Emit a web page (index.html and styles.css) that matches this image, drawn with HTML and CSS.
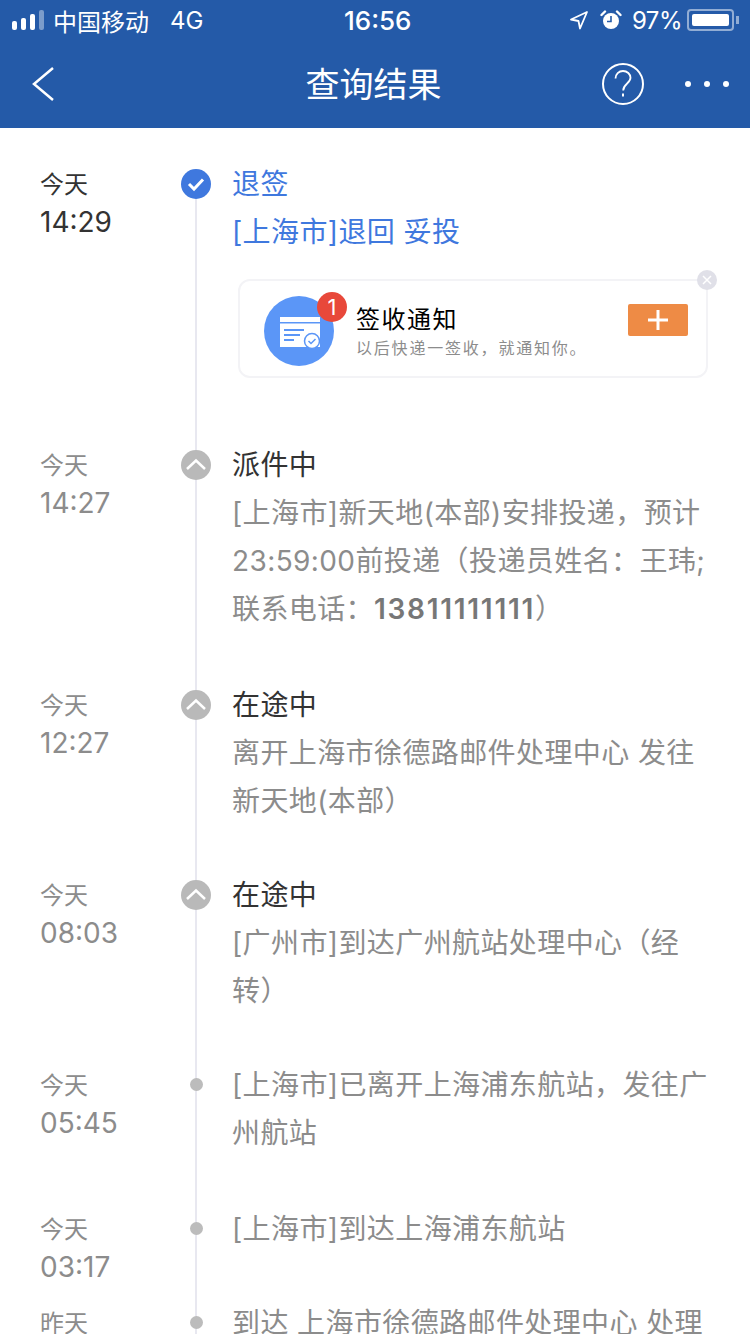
FILE: index.html
```html
<!DOCTYPE html>
<html lang="zh-CN">
<head>
    <meta charset="UTF-8">
    <meta name="viewport" content="width=device-width, initial-scale=1.0">
    <title>查询结果</title>
    <link rel="stylesheet" href="styles.css">
</head>
<body>
    <header class="header">
        <div class="status-bar">
            <div class="status-left">
                <div class="signal">
                    <span class="bar bar-1"></span>
                    <span class="bar bar-2"></span>
                    <span class="bar bar-3"></span>
                    <span class="bar bar-4"></span>
                </div>
                <span class="carrier">中国移动</span>
                <span class="network">4G</span>
            </div>
            <div class="status-time">16:56</div>
            <div class="status-right">
                <svg class="icon-location" width="20" height="20" viewBox="0 0 20 20">
                    <path d="M18 2 2 9.5l7.5 1.5L11 18.500z" fill="none" stroke="#fff" stroke-width="1.800" stroke-linejoin="round"/>
                </svg>
                <svg class="icon-alarm" width="22" height="22" viewBox="0 0 22 22">
                    <circle cx="11" cy="12" r="8" fill="#fff"/>
                    <path d="M11 7v5.500H7" fill="none" stroke="#245aa8" stroke-width="1.600"/>
                    <path d="M1.500 6 5 2.500M20.500 6 17 2.500" stroke="#fff" stroke-width="2.400" stroke-linecap="round"/>
                </svg>
                <span class="battery-text">97%</span>
                <div class="battery"><div class="battery-fill"></div></div>
                <div class="battery-nub"></div>
            </div>
        </div>
        <nav class="nav-bar">
            <div class="nav-side">
                <svg class="nav-back" width="24" height="36" viewBox="0 0 24 36">
                    <path d="M22 2 3 18l19 16" fill="none" stroke="#fff" stroke-width="2.500"/>
                </svg>
            </div>
            <h1 class="nav-title">查询结果</h1>
            <div class="nav-side nav-right">
                <svg width="44" height="44" viewBox="0 0 44 44">
                    <circle cx="22" cy="22" r="20" fill="none" stroke="#fff" stroke-width="2"/>
                    <path d="M14.500 16.500c0-4.500 3.300-7.500 7.500-7.500s7.500 3 7.500 6.800c0 5.500-7.300 6-7.300 12.700" fill="none" stroke="#fff" stroke-width="1.800"/>
                    <rect x="21" y="31.500" width="2" height="3" fill="#fff"/>
                </svg>
                <div class="more-dots"><span></span><span></span><span></span></div>
            </div>
        </nav>
    </header>

    <main class="timeline">
        <section class="row row-first">
            <div class="time-col time-active"><div>今天</div><div class="clock">14:29</div></div>
            <div class="axis">
                <svg class="axis-icon" width="30" height="30" viewBox="0 0 30 30">
                    <circle cx="15" cy="15" r="15" fill="#3f78de"/>
                    <path d="M8 15l5 5 9-9.500" fill="none" stroke="#fff" stroke-width="3"/>
                </svg>
            </div>
            <div class="content content-active">
                <div class="title">退签</div>
                <div>[上海市]退回 妥投</div>
                <div class="notice-card">
                    <div class="notice-icon">
                        <svg width="70" height="70" viewBox="0 0 70 70">
                            <circle cx="35" cy="35" r="35" fill="#5b96f7"/>
                            <path d="M16 21h40v5H16zM16 27.500h40V51H16z" fill="#fff"/>
                            <path d="M20 34h20M20 39h16M20 44h10" stroke="#5b96f7" stroke-width="1.800"/>
                            <circle cx="48" cy="45" r="7.500" fill="#fff" stroke="#5b96f7" stroke-width="1.500"/>
                            <path d="M44.500 45l2.500 2.500 4.500-4.500" fill="none" stroke="#5b96f7" stroke-width="1.500"/>
                        </svg>
                        <span class="badge">1</span>
                    </div>
                    <div class="notice-text">
                        <div class="notice-title">签收通知</div>
                        <div class="notice-sub">以后快递一签收，就通知你。</div>
                    </div>
                    <div class="notice-add">
                        <svg width="20" height="20" viewBox="0 0 20 20">
                            <path d="M10 0v20M0 10h20" stroke="#fff" stroke-width="3"/>
                        </svg>
                    </div>
                    <div class="notice-close">
                        <svg width="20" height="20" viewBox="0 0 20 20">
                            <circle cx="10" cy="10" r="10" fill="#e0e0e8"/>
                            <path d="M6 6l8 8M14 6l-8 8" stroke="#fff" stroke-width="1.500"/>
                        </svg>
                    </div>
                </div>
            </div>
        </section>

        <section class="row">
            <div class="time-col"><div>今天</div><div class="clock">14:27</div></div>
            <div class="axis">
                <svg class="axis-icon" width="30" height="30" viewBox="0 0 30 30">
                    <circle cx="15" cy="15" r="15" fill="#b9b9b9"/>
                    <path d="M6 19 15 10.500l9 8.500" fill="none" stroke="#fff" stroke-width="2.500"/>
                </svg>
            </div>
            <div class="content">
                <div class="title">派件中</div>
                <div>[上海市]新天地(本部)安排投递，预计<br>23:59:00前投递（投递员姓名：王玮;<br>联系电话：<b>13811111111</b>）</div>
            </div>
        </section>

        <section class="row row-tight">
            <div class="time-col"><div>今天</div><div class="clock">12:27</div></div>
            <div class="axis">
                <svg class="axis-icon" width="30" height="30" viewBox="0 0 30 30">
                    <circle cx="15" cy="15" r="15" fill="#b9b9b9"/>
                    <path d="M6 19 15 10.500l9 8.500" fill="none" stroke="#fff" stroke-width="2.500"/>
                </svg>
            </div>
            <div class="content">
                <div class="title">在途中</div>
                <div>离开上海市徐德路邮件处理中心 发往<br>新天地(本部）</div>
            </div>
        </section>

        <section class="row row-tight">
            <div class="time-col"><div>今天</div><div class="clock">08:03</div></div>
            <div class="axis">
                <svg class="axis-icon" width="30" height="30" viewBox="0 0 30 30">
                    <circle cx="15" cy="15" r="15" fill="#b9b9b9"/>
                    <path d="M6 19 15 10.500l9 8.500" fill="none" stroke="#fff" stroke-width="2.500"/>
                </svg>
            </div>
            <div class="content">
                <div class="title">在途中</div>
                <div>[广州市]到达广州航站处理中心（经<br>转）</div>
            </div>
        </section>

        <section class="row">
            <div class="time-col"><div>今天</div><div class="clock">05:45</div></div>
            <div class="axis"><span class="axis-dot"></span></div>
            <div class="content">
                <div>[上海市]已离开上海浦东航站，发往广<br>州航站</div>
            </div>
        </section>

        <section class="row row-short">
            <div class="time-col"><div>今天</div><div class="clock">03:17</div></div>
            <div class="axis"><span class="axis-dot"></span></div>
            <div class="content">
                <div>[上海市]到达上海浦东航站</div>
            </div>
        </section>

        <section class="row">
            <div class="time-col"><div>昨天</div></div>
            <div class="axis"><span class="axis-dot"></span></div>
            <div class="content">
                <div>到达 上海市徐德路邮件处理中心 处理</div>
            </div>
        </section>
    </main>
</body>
</html>
```

FILE: styles.css
```css
* {
    box-sizing: border-box;
}
body {
    margin: 0;
    height: 1334px;
    overflow: hidden;
    background-color: #fff;
    font-family: Inter, "Noto Sans CJK SC", sans-serif;
}
.header {
    height: 128px;
    background-color: #245aa8;
    color: #fff;
}
.status-bar {
    position: relative;
    display: flex;
    justify-content: space-between;
    align-items: center;
    height: 40px;
    padding: 0 11px 0 12px;
    font-size: 24px;
}
.status-left,
.status-right {
    display: flex;
    align-items: center;
}
.signal {
    display: flex;
    align-items: flex-end;
    gap: 4px;
    height: 20px;
    margin-right: 9px;
}
.bar {
    width: 5px;
    border-radius: 2px;
    background-color: #fff;
}
.bar-1 { height: 9px; }
.bar-2 { height: 12px; }
.bar-3 { height: 16px; }
.bar-4 { height: 20px; opacity: 0.4; }
.network {
    margin-left: 21px;
}
.status-time {
    position: absolute;
    left: 344px;
    font-size: 26px;
    font-weight: 500;
}
.icon-location {
    margin-right: 11px;
}
.icon-alarm {
    margin-right: 10px;
}
.battery-text {
    margin-right: 5px;
    letter-spacing: -0.500px;
}
.battery {
    width: 47px;
    height: 22px;
    padding: 3px;
    border: 2px solid rgba(255, 255, 255, 0.5);
    border-radius: 4px;
}
.battery-fill {
    height: 100%;
    border-radius: 2px;
    background-color: #fff;
}
.battery-nub {
    width: 3px;
    height: 8px;
    margin-left: 2px;
    background-color: rgba(255, 255, 255, 0.5);
}
.nav-bar {
    display: flex;
    align-items: center;
    height: 88px;
    padding: 0 21px;
}
.nav-back {
    margin-left: 10px;
}
.nav-side {
    display: flex;
    align-items: center;
    flex: 1;
}
.nav-right {
    justify-content: flex-end;
}
.nav-title {
    margin: -4px 3px 0 0;
    font-size: 34px;
    font-weight: normal;
}
.more-dots {
    display: flex;
    gap: 13px;
    margin-left: 40px;
}
.more-dots span {
    width: 6px;
    height: 6px;
    border-radius: 50%;
    background-color: #fff;
}
.timeline {
    position: relative;
    padding: 32px 40px 0;
}
.timeline::before {
    content: "";
    position: absolute;
    top: 56px;
    bottom: 0;
    left: 195px;
    width: 2px;
    background-color: #e8e8f0;
}
.row {
    position: relative;
    display: flex;
    padding-bottom: 48px;
}
.row-first {
    padding-bottom: 63px;
}
.row-tight {
    padding-bottom: 46px;
}
.row-short {
    padding-bottom: 18px;
}
.time-col {
    width: 140px;
    padding-top: 1px;
    font-size: 24px;
    line-height: 48px;
    color: #8c8c8c;
}
.time-active {
    color: #333;
}
.clock {
    margin-top: -1px;
    font-size: 28px;
    line-height: 28px;
}
.axis {
    display: flex;
    flex-direction: column;
    align-items: center;
    width: 32px;
    margin-right: 20px;
}
.axis-icon {
    margin-top: 9px;
}
.axis-dot {
    width: 13px;
    height: 13px;
    margin-top: 17px;
    border-radius: 50%;
    background-color: #bcbcbc;
}
.content {
    flex: 1;
    font-size: 28px;
    line-height: 48px;
    letter-spacing: 0.400px;
    white-space: nowrap;
    color: #8c8c8c;
}
.content b {
    font-weight: 600;
    letter-spacing: 1.700px;
    color: #777;
}
.title {
    color: #333;
}
.content-active,
.content-active .title {
    color: #3f78de;
}
.notice-card {
    position: relative;
    display: flex;
    align-items: center;
    width: 470px;
    height: 99px;
    margin: 23px 0 0 6px;
    padding: 4px 18px 0 24px;
    border: 2px solid #f3f3f6;
    border-radius: 12px;
}
.notice-icon {
    position: relative;
    display: flex;
    margin-right: 22px;
}
.badge {
    position: absolute;
    top: -4px;
    right: -13px;
    width: 30px;
    height: 30px;
    border-radius: 50%;
    background-color: #e8483a;
    color: #fff;
    font-size: 22px;
    line-height: 30px;
    letter-spacing: 0;
    text-align: center;
}
.notice-text {
    flex: 1;
}
.notice-title {
    font-size: 24px;
    line-height: 34px;
    letter-spacing: 1.500px;
    color: #000;
}
.notice-sub {
    font-size: 16px;
    line-height: 22px;
    letter-spacing: 1.800px;
    color: #8c8c8c;
}
.notice-add {
    display: flex;
    justify-content: center;
    align-items: center;
    align-self: flex-start;
    width: 60px;
    height: 32px;
    margin-top: 19px;
    border-radius: 2px;
    background-color: #ee8b45;
}
.notice-close {
    position: absolute;
    top: -11px;
    right: -11px;
    display: flex;
}
```
